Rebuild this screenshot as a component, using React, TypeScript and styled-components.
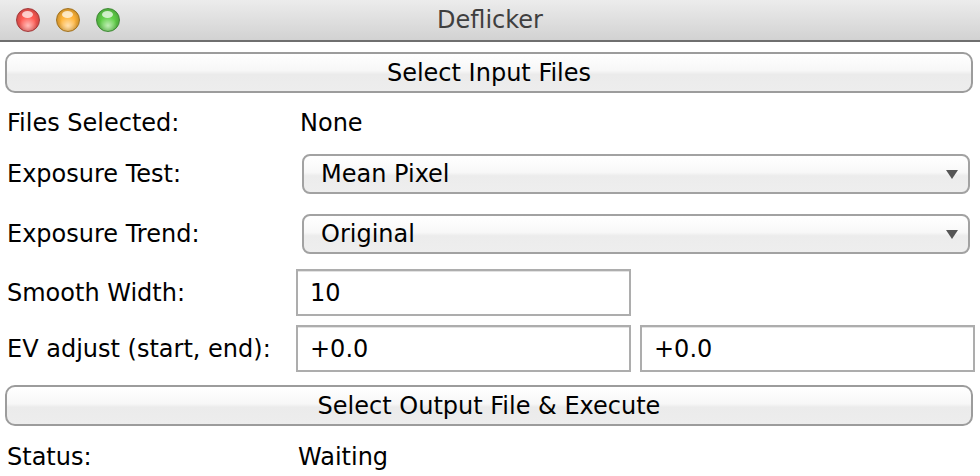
import styled, { createGlobalStyle } from 'styled-components'

const GlobalStyle = createGlobalStyle`
  html, body {
    margin: 0;
    padding: 0;
    background: #ffffff;
  }
  body {
    font-family: "DejaVu Sans", "Liberation Sans", sans-serif;
    font-size: 24px;
    color: #000000;
  }
`

const Window = styled.div`
  width: 980px;
  height: 476px;
  overflow: hidden;
  background: #ffffff;
`

const TitleBar = styled.div`
  height: 40px;
  display: grid;
  grid-template-columns: 1fr auto 1fr;
  align-items: center;
  background: linear-gradient(#ececec, #d2d2d2);
  border-bottom: 2px solid #6f6f6f;
`

const Lights = styled.div`
  display: flex;
  gap: 16px;
  padding-left: 16px;
`

const Light = styled.span<{ $base: string; $rim: string }>`
  width: 24px;
  height: 24px;
  border-radius: 50%;
  box-sizing: border-box;
  border: 1.5px solid ${p => p.$rim};
  background: radial-gradient(circle at 50% 75%, #ffffff99 0%, transparent 45%),
    radial-gradient(circle at 50% 50%, ${p => p.$base} 40%, ${p => p.$rim} 100%);
  position: relative;
  &::after {
    content: '';
    position: absolute;
    left: 5px;
    top: 2px;
    width: 11px;
    height: 7px;
    border-radius: 50%;
    background: rgba(255, 255, 255, 0.7);
  }
`

const Title = styled.div`
  color: #3f3f3f;
  font-size: 24px;
`

const Content = styled.div`
  padding: 0 5px;
`

const PushButton = styled.button<{ $mt: number }>`
  display: block;
  box-sizing: border-box;
  width: 968px;
  height: 41px;
  margin-top: ${p => p.$mt}px;
  border: 2px solid #9c9c9c;
  border-radius: 10px;
  background: linear-gradient(#ffffff 0%, #f7f7f7 45%, #ebebeb 55%, #ededed 100%);
  font-family: inherit;
  font-size: 24px;
  color: #000000;
  padding: 0;
`

const Row = styled.div<{ $mt: number; $h: number }>`
  display: grid;
  grid-template-columns: 282px 335px 335px;
  column-gap: 9px;
  align-items: center;
  margin-top: ${p => p.$mt}px;
  height: ${p => p.$h}px;
`

const Label = styled.div`
  padding-left: 2px;
  white-space: nowrap;
`

const Value = styled.div<{ $pl: number }>`
  padding-left: ${p => p.$pl}px;
`

const Select = styled.div`
  grid-column: 2 / 4;
  box-sizing: border-box;
  height: 40px;
  margin: 0 5px 0 6px;
  display: flex;
  align-items: center;
  justify-content: space-between;
  padding: 0 10px 0 17px;
  border: 2px solid #a2a2a2;
  border-radius: 8px;
  background: linear-gradient(#ffffff 0%, #f8f8f8 45%, #ececec 55%, #eeeeee 100%);
`

const Arrow = styled.span`
  width: 0;
  height: 0;
  border-left: 6px solid transparent;
  border-right: 6px solid transparent;
  border-top: 9px solid #555555;
`

const TextField = styled.div`
  box-sizing: border-box;
  height: 47px;
  display: flex;
  align-items: center;
  padding-left: 12px;
  border: 2px solid #adadad;
  box-shadow: inset 0 1px 0 #e2e2e2;
  background: #ffffff;
`

export default function App() {
  return (
    <Window>
      <GlobalStyle />
      <TitleBar>
        <Lights>
          <Light $base="#ff5a52" $rim="#a3393a" />
          <Light $base="#ffb43a" $rim="#a2721f" />
          <Light $base="#5fcf46" $rim="#3f8a35" />
        </Lights>
        <Title>Deflicker</Title>
        <div />
      </TitleBar>
      <Content>
        <PushButton $mt={10}>Select Input Files</PushButton>
        <Row $mt={8} $h={44}>
          <Label>Files Selected:</Label>
          <Value $pl={4}>None</Value>
        </Row>
        <Row $mt={4} $h={50}>
          <Label>Exposure Test:</Label>
          <Select>
            Mean Pixel
            <Arrow />
          </Select>
        </Row>
        <Row $mt={10} $h={50}>
          <Label>Exposure Trend:</Label>
          <Select>
            Original
            <Arrow />
          </Select>
        </Row>
        <Row $mt={10} $h={47}>
          <Label>Smooth Width:</Label>
          <TextField>10</TextField>
        </Row>
        <Row $mt={9} $h={47}>
          <Label>EV adjust (start, end):</Label>
          <TextField>+0.0</TextField>
          <TextField>+0.0</TextField>
        </Row>
        <PushButton $mt={13}>Select Output File &amp; Execute</PushButton>
        <Row $mt={11} $h={40}>
          <Label>Status:</Label>
          <Value $pl={2}>Waiting</Value>
        </Row>
      </Content>
    </Window>
  )
}
